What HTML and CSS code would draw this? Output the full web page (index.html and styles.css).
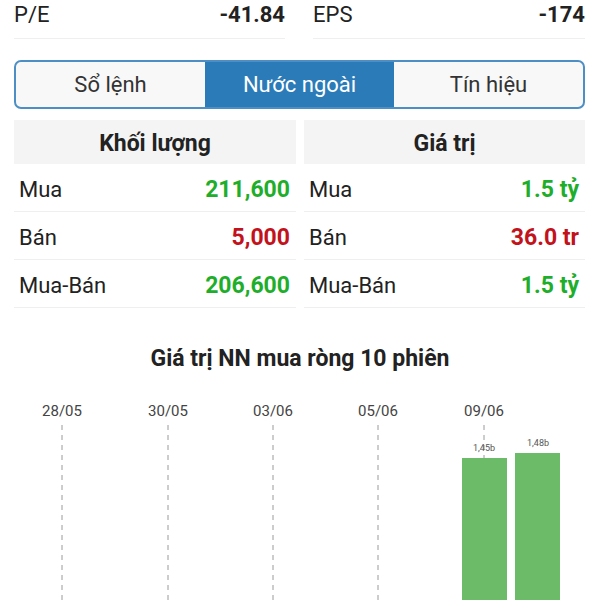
FILE: index.html
```html
<!DOCTYPE html>
<html lang="vi">
<head>
  <meta charset="UTF-8" />
  <meta name="viewport" content="width=device-width, initial-scale=1.0"/>
  <title>Nước ngoài</title>
  <link rel="stylesheet" href="styles.css">
</head>
<body>
  <div class="stats">
    <div class="stat"><span>P/E</span><b>-41.84</b></div>
    <div class="stat"><span>EPS</span><b>-174</b></div>
  </div>

  <div class="tabs">
    <div class="tab">Sổ lệnh</div>
    <div class="tab active">Nước ngoài</div>
    <div class="tab">Tín hiệu</div>
  </div>

  <div class="tables">
    <div class="table">
      <div class="table-head">Khối lượng</div>
      <div class="row"><span>Mua</span><b class="up">211,600</b></div>
      <div class="row"><span>Bán</span><b class="down">5,000</b></div>
      <div class="row"><span>Mua-Bán</span><b class="up">206,600</b></div>
    </div>
    <div class="table">
      <div class="table-head">Giá trị</div>
      <div class="row"><span>Mua</span><b class="up">1.5 tỷ</b></div>
      <div class="row"><span>Bán</span><b class="down">36.0 tr</b></div>
      <div class="row"><span>Mua-Bán</span><b class="up">1.5 tỷ</b></div>
    </div>
  </div>

  <h3 class="chart-title">Giá trị NN mua ròng 10 phiên</h3>

  <svg class="chart" width="600" height="220" viewBox="0 0 600 220">
    <g class="grid">
      <line x1="62" y1="45" x2="62" y2="220"/>
      <line x1="168" y1="45" x2="168" y2="220"/>
      <line x1="273" y1="45" x2="273" y2="220"/>
      <line x1="378" y1="45" x2="378" y2="220"/>
      <line x1="484" y1="45" x2="484" y2="220"/>
    </g>
    <g class="dates">
      <text x="62" y="36">28/05</text>
      <text x="168" y="36">30/05</text>
      <text x="273" y="36">03/06</text>
      <text x="378" y="36">05/06</text>
      <text x="484" y="36">09/06</text>
    </g>
    <rect class="bar" x="462" y="78" width="45" height="142"/>
    <rect class="bar" x="515" y="73" width="45" height="147"/>
    <text class="bar-label" x="484" y="71">1,45b</text>
    <text class="bar-label" x="538" y="66">1,48b</text>
  </svg>
</body>
</html>
```

FILE: styles.css
```css
* {
  box-sizing: border-box;
}

body {
  margin: 0;
  padding: 0;
  font-family: Roboto, 'Noto Sans', sans-serif;
  color: #222;
  background: #fff;
  overflow: hidden;
}

.stats {
  display: grid;
  grid-template-columns: 271px 272px;
  gap: 28px;
  padding: 0 15px 0 14px;
}

.stat {
  display: flex;
  justify-content: space-between;
  font-size: 22px;
  line-height: 26px;
  padding: 2px 0 10px;
  border-bottom: 1px solid #efefef;
}

.stat b {
  font-weight: bold;
  color: #222;
}

.tabs {
  display: flex;
  margin: 21px 15px 0 14px;
  height: 49px;
  border: 2px solid #4d8fc4;
  border-radius: 7px;
  overflow: hidden;
  background: #f8f8f8;
}

.tab {
  flex: 1;
  display: flex;
  align-items: center;
  justify-content: center;
  font-size: 22px;
  color: #333;
}

.tab.active {
  background: #2b7bb9;
  color: #fff;
}

.tables {
  display: grid;
  grid-template-columns: 282px 281px;
  gap: 8px;
  padding: 0 15px 0 14px;
  margin-top: 11px;
}

.table-head {
  height: 44px;
  padding-top: 2px;
  background: #f4f4f4;
  display: flex;
  align-items: center;
  justify-content: center;
  font-size: 23px;
  font-weight: bold;
  color: #222;
}

.row {
  display: flex;
  justify-content: space-between;
  align-items: center;
  height: 48px;
  padding: 3px 6px 0 5px;
  border-bottom: 1px solid #efefef;
  font-size: 22px;
}

.row b {
  font-size: 23px;
  font-weight: bold;
}

.up {
  color: #1fae2b;
}

.down {
  color: #c2121c;
}

.chart-title {
  margin: 38px 0 0;
  text-align: center;
  font-size: 23px;
  line-height: 26px;
  font-weight: bold;
  color: #222;
}

.chart {
  display: block;
  margin-top: 8px;
}

.grid line {
  stroke: #9a9a9a;
  stroke-width: 1;
  stroke-dasharray: 5 5;
}

.dates text {
  font-family: Roboto, sans-serif;
  font-size: 15px;
  fill: #444;
  text-anchor: middle;
}

.bar {
  fill: #6cbb69;
}

.bar-label {
  font-family: Roboto, sans-serif;
  font-size: 9px;
  fill: #555;
  text-anchor: middle;
}
```
